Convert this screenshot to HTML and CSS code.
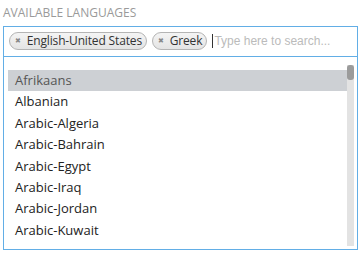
FILE: index.html
```html
<!DOCTYPE html>
<html>
<head>
    <title>Available languages</title>
    <link rel="stylesheet" href="styles.css">
</head>
<body>
    <div class="field">
        <div class="label">Available Languages</div>
        <div class="picker">
            <div class="search-row">
                <span class="chip"><span class="chip-x">&#x2716;</span>English-United States</span>
                <span class="chip"><span class="chip-x">&#x2716;</span>Greek</span>
                <span class="caret"></span>
                <input type="text" class="search" placeholder="Type here to search...">
            </div>
            <div class="list">
                <div class="options">
                    <div class="option selected">Afrikaans</div>
                    <div class="option">Albanian</div>
                    <div class="option">Arabic-Algeria</div>
                    <div class="option">Arabic-Bahrain</div>
                    <div class="option">Arabic-Egypt</div>
                    <div class="option">Arabic-Iraq</div>
                    <div class="option">Arabic-Jordan</div>
                    <div class="option">Arabic-Kuwait</div>
                    <div class="option">Arabic-Lebanon</div>
                </div>
                <div class="scrollbar">
                    <div class="thumb"></div>
                </div>
            </div>
        </div>
    </div>
</body>
</html>
```

FILE: styles.css
```css
body {
    margin: 0;
    padding: 3px;
    font-family: "Open Sans", "DejaVu Sans", sans-serif;
    background: #fff;
}
.field {
    width: 355px;
}
.label {
    height: 21px;
    padding-top: 2px;
    font-size: 12px;
    line-height: 16px;
    color: #9a9a9a;
    text-transform: uppercase;
}
.picker {
    border: 1px solid #62aee6;
}
.search-row {
    display: flex;
    align-items: center;
    height: 29px;
    padding: 0 5px;
    border-bottom: 1px solid #62aee6;
}
.chip {
    display: flex;
    align-items: center;
    flex-shrink: 0;
    white-space: nowrap;
    height: 16px;
    margin-right: 5px;
    margin-top: -2px;
    padding: 0 4px 0 5px;
    border: 1px solid #b4b4b4;
    border-radius: 9px;
    background: linear-gradient(#f4f4f4, #e4e4e4);
    font-size: 12px;
    letter-spacing: -0.15px;
    color: #333;
}
.chip-x {
    font-size: 7px;
    color: #888;
    margin-right: 6px;
}
.caret {
    flex-shrink: 0;
    width: 1px;
    height: 14px;
    background: #333;
    margin-top: -2px;
}
.search {
    flex: 1;
    min-width: 0;
    border: none;
    outline: none;
    padding: 0 0 0 1px;
    margin-top: -2px;
    font-family: "Liberation Sans", Arial, sans-serif;
    font-size: 12px;
    color: #333;
    background: transparent;
}
.search::placeholder {
    color: #bbb;
}
.list {
    display: flex;
    box-sizing: border-box;
    height: 192px;
    padding: 8px 3px 3px 4px;
}
.options {
    flex: 1;
    padding-top: 5px;
    overflow: hidden;
}
.option {
    height: 21.4px;
    line-height: 20px;
    padding-left: 7px;
    font-size: 13px;
    color: #222;
}
.option.selected {
    background: #cdd0d4;
    color: #555;
}
.scrollbar {
    width: 7px;
    background: #e3e3e3;
}
.thumb {
    height: 15px;
    border-radius: 3px;
    background: #9b9b9b;
}
```
